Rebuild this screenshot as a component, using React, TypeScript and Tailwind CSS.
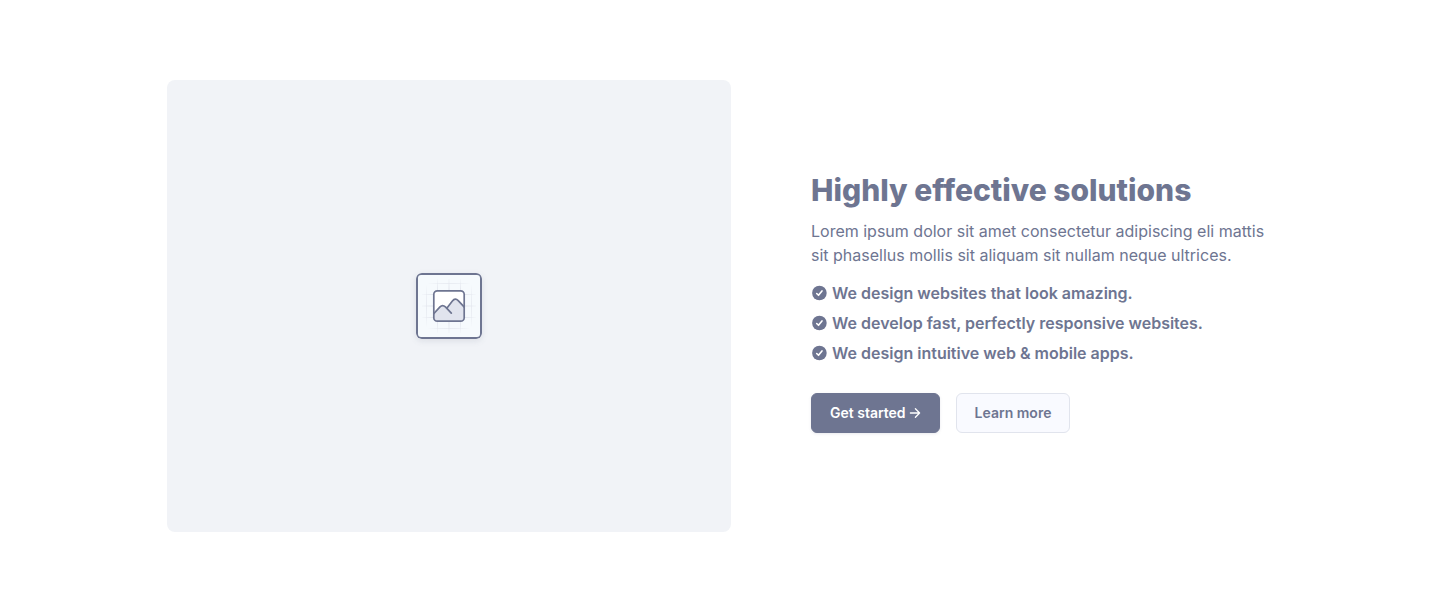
import React from "react";

const features: string[] = [
  "We design websites that look amazing.",
  "We develop fast, perfectly responsive websites.",
  "We design intuitive web & mobile apps.",
];

function CheckIcon() {
  return (
    <svg viewBox="0 0 16 16" className="size-4 shrink-0" aria-hidden="true">
      <circle cx="8.4" cy="8" r="7.3" fill="#6E7591" />
      <path
        d="M5.7 8.5 7.5 10.3 11 5.9"
        fill="none"
        stroke="#fff"
        strokeWidth="1.6"
        strokeLinecap="round"
        strokeLinejoin="round"
      />
    </svg>
  );
}

function ArrowIcon() {
  return (
    <svg viewBox="0 0 12 12" className="size-3" aria-hidden="true">
      <path
        d="M1.4 6H10.6M6.4 1.8 10.6 6 6.4 10.2"
        fill="none"
        stroke="currentColor"
        strokeWidth="1.3"
        strokeLinecap="round"
        strokeLinejoin="round"
      />
    </svg>
  );
}

const gridLines = [10.5, 21.5, 33, 44.5, 55.5];

function PicturePlaceholder() {
  return (
    <svg
      viewBox="0 0 66 66"
      className="size-[66px] rounded-md shadow-[0_2px_6px_rgba(110,117,145,0.16)]"
      role="img"
      aria-label="Image placeholder"
    >
      <defs>
        <radialGradient id="fade" gradientUnits="userSpaceOnUse" cx="33" cy="33" r="31">
          <stop offset="0.55" stopColor="#E1E4EC" />
          <stop offset="1" stopColor="#E1E4EC" stopOpacity="0" />
        </radialGradient>
        <clipPath id="frame">
          <rect x="17.8" y="17.8" width="30.4" height="30.4" rx="3.5" />
        </clipPath>
      </defs>
      <rect x="1" y="1" width="64" height="64" rx="4" fill="#F6FAFD" stroke="#6E7591" strokeWidth="2" />
      <g fill="url(#fade)">
        {gridLines.map((p) => (
          <React.Fragment key={p}>
            <rect x={p - 0.5} y="6" width="1" height="54" />
            <rect x="6" y={p - 0.5} width="54" height="1" />
          </React.Fragment>
        ))}
      </g>
      <rect x="17.8" y="17.8" width="30.4" height="30.4" rx="3.5" fill="#fff" />
      <g clipPath="url(#frame)" strokeWidth="1.7" strokeLinecap="round" strokeLinejoin="round">
        <path
          d="M17 41.5 24 33.9Q26.6 31.2 29.4 33.9L30.8 35.3 36.4 28Q39.2 24.6 42.2 27.6L49 34.8V49H17Z"
          fill="#E1E4EE"
        />
        <path
          d="M17 41.5 24 33.9Q26.6 31.2 29.4 33.9L35.3 40.2M30.8 35.3 36.4 28Q39.2 24.6 42.2 27.6L49 34.8"
          fill="none"
          stroke="#6E7591"
        />
      </g>
      <rect x="17.8" y="17.8" width="30.4" height="30.4" rx="3.5" fill="none" stroke="#6E7591" strokeWidth="1.7" />
    </svg>
  );
}

export default function App() {
  return (
    <main className="bg-white px-6 py-20 font-['Inter',sans-serif] text-[#6E7591]">
      <section className="mx-auto grid max-w-[1106px] items-center gap-20 md:grid-cols-[564fr_462fr]">
        <div className="flex aspect-[564/452] items-center justify-center rounded-lg bg-[#F1F3F7]">
          <PicturePlaceholder />
        </div>
        <div className="pb-2">
          <h1 className="text-3xl leading-[38px] font-extrabold">Highly effective solutions</h1>
          <p className="mt-2.5 text-base leading-6">
            Lorem ipsum dolor sit amet consectetur adipiscing eli mattis sit phasellus mollis sit
            aliquam sit nullam neque ultrices.
          </p>
          <ul className="mt-3.5 flex flex-col gap-1.5">
            {features.map((feature) => (
              <li key={feature} className="flex items-center gap-[5px] text-base leading-6 font-semibold">
                <CheckIcon />
                {feature}
              </li>
            ))}
          </ul>
          <div className="mt-7 flex gap-4 text-sm font-semibold">
            <button
              type="button"
              className="flex h-10 items-center gap-[3px] rounded-md border border-[#6E7591] bg-[#6E7591] px-[18px] text-white shadow-[0_1px_3px_rgba(110,117,145,0.16)]"
            >
              Get started
              <ArrowIcon />
            </button>
            <button
              type="button"
              className="h-10 rounded-md border border-[#E1E4ED] bg-[#F9FAFF] px-[18px]"
            >
              Learn more
            </button>
          </div>
        </div>
      </section>
    </main>
  );
}
